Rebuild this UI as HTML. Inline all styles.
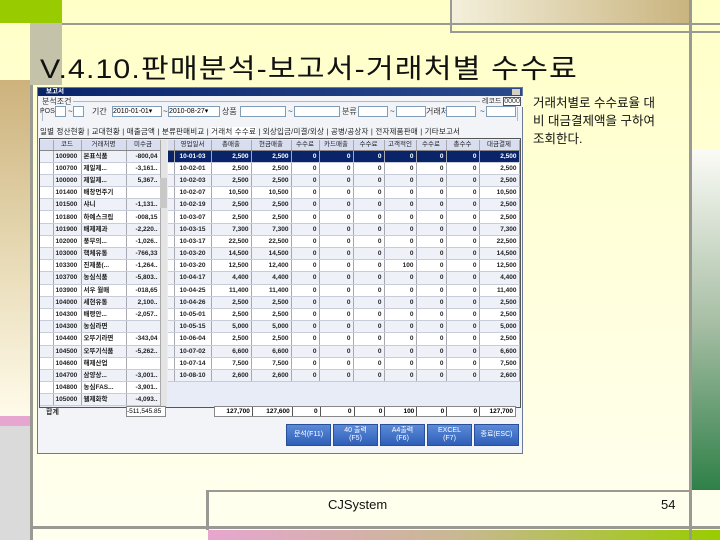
<!DOCTYPE html>
<html><head><meta charset="utf-8">
<style>
*{margin:0;padding:0;box-sizing:border-box}
body{width:720px;height:540px;position:relative;overflow:hidden;background:linear-gradient(#ffffc8,#fffff0);font-family:"Liberation Sans","Noto Sans CJK KR",sans-serif}
.a{position:absolute}
.ln{position:absolute;background:#9a9a94}
table{border-collapse:collapse;table-layout:fixed;position:absolute;font-size:6.5px;font-weight:bold;color:#222}
td{height:12.2px;border-right:1px solid #a8a8b0;border-bottom:1px solid #c8ccd8;white-space:nowrap;overflow:hidden;padding:0 2px;line-height:11px}
tr:nth-child(even) td{background:#eef1f8}
tr:nth-child(odd) td{background:#fff}
tr.h td{background:#d8def0;height:10px;line-height:9px;text-align:center;font-weight:normal;border-bottom:1px solid #888}
tr.s td{background:#0a246a;color:#fff}
.r{text-align:right}
.c{text-align:center}
.in{position:absolute;background:#fff;border:1px solid #7f9db9;height:11px}
.tx{position:absolute;font-size:8px;color:#333;line-height:11px}
.btn{position:absolute;top:424px;height:22px;width:45px;background:linear-gradient(#5b8ad8,#2f5fb8);color:#fff;font-size:7px;text-align:center;line-height:8px;display:flex;align-items:center;justify-content:center;border:1px solid #2a4f9a}
</style></head><body>
<div class="a" style="left:0;top:0;width:62px;height:23px;background:#99cc00"></div>
<div class="a" style="left:30px;top:23px;width:32px;height:62px;background:#c4c2a8"></div>
<div class="a" style="left:0;top:80px;width:30px;height:336px;background:linear-gradient(#cdb27c,#e6d8b2 50%,#fffbea)"></div>
<div class="a" style="left:0;top:416px;width:30px;height:10px;background:#e7a6cf"></div>
<div class="a" style="left:0;top:426px;width:30px;height:114px;background:#dadada"></div>
<div class="a" style="left:450px;top:0;width:240px;height:23px;background:linear-gradient(90deg,#f4f0dc,#c9b47e)"></div>
<div class="a" style="left:692px;top:150px;width:28px;height:340px;background:linear-gradient(#fbfbf6,#a9bfa6 50%,#2f8048)"></div>
<div class="a" style="left:208px;top:530px;width:512px;height:10px;background:linear-gradient(90deg,#e7a6cf,#c8b890 50%,#99cc00)"></div>
<div class="ln" style="left:62px;top:23px;width:658px;height:2px"></div>
<div class="ln" style="left:450px;top:0;width:2px;height:33px"></div>
<div class="ln" style="left:450px;top:31px;width:270px;height:2px"></div>
<div class="ln" style="left:689px;top:0;width:3px;height:540px"></div>
<div class="ln" style="left:30px;top:85px;width:3px;height:455px"></div>
<div class="ln" style="left:30px;top:526px;width:690px;height:3px"></div>
<div class="ln" style="left:206px;top:490px;width:3px;height:40px"></div>
<div class="ln" style="left:206px;top:490px;width:486px;height:2px"></div>

<div class="a" style="left:40px;top:52px;font-size:27px;color:#111;letter-spacing:1px;line-height:34px;white-space:nowrap;transform:scaleX(1.12);transform-origin:0 0">V.4.10.판매분석-보고서-거래처별 수수료</div>
<div class="a" style="left:533px;top:94px;font-size:12.5px;line-height:18px;color:#111;width:160px">거래처별로 수수료율 대<br>비 대금결제액을 구하여<br>조회한다.</div>
<div class="a" style="left:328px;top:497px;font-size:13px;color:#111">CJSystem</div>
<div class="a" style="left:661px;top:497px;font-size:13px;color:#111">54</div>

<div class="a" style="left:37px;top:87px;width:486px;height:367px;background:#f2f4f8;border:1px solid #6a7a98"></div>
<div class="a" style="left:38px;top:88px;width:484px;height:8px;background:linear-gradient(90deg,#0a246a,#2a4a8e)"></div>
<div class="a" style="left:46px;top:87px;font-size:6.5px;color:#fff;font-weight:bold;line-height:9px">보고서</div>
<div class="a" style="left:512px;top:89px;width:8px;height:6px;background:#d4d0c8"></div>
<div class="a" style="left:42px;top:101px;width:476px;height:20px;border:1px solid #b0b8c8;border-bottom:none"></div>
<div class="tx" style="left:40px;top:96px;background:#f2f4f8;padding:0 2px;color:#333">분석조건</div>
<div class="tx" style="left:480px;top:96px;background:#f2f4f8;padding:0 2px;font-size:7px">레코드 <span style="border:1px solid #555;background:#fff">0000</span></div>
<div class="tx" style="left:40px;top:106px;font-size:7px">POS#</div>
<div class="in" style="left:55px;top:106px;width:11px"></div><div class="tx" style="left:68px;top:106px">~</div>
<div class="in" style="left:73px;top:106px;width:11px"></div>
<div class="tx" style="left:92px;top:106px">기간</div>
<div class="in" style="left:112px;top:106px;width:50px;font-size:7px;line-height:9px">2010-01-01▾</div>
<div class="tx" style="left:163px;top:106px">~</div>
<div class="in" style="left:168px;top:106px;width:52px;font-size:7px;line-height:9px">2010-08-27▾</div>
<div class="tx" style="left:222px;top:106px">상품</div>
<div class="in" style="left:240px;top:106px;width:46px"></div><div class="tx" style="left:288px;top:106px">~</div>
<div class="in" style="left:294px;top:106px;width:46px"></div>
<div class="tx" style="left:342px;top:106px">분류</div>
<div class="in" style="left:358px;top:106px;width:30px"></div><div class="tx" style="left:390px;top:106px">~</div>
<div class="in" style="left:396px;top:106px;width:30px"></div>
<div class="tx" style="left:426px;top:106px">거래처</div>
<div class="in" style="left:446px;top:106px;width:30px"></div><div class="tx" style="left:480px;top:106px">~</div>
<div class="in" style="left:486px;top:106px;width:30px"></div>
<div class="a" style="left:40px;top:126px;width:478px;height:12px;font-size:7.5px;color:#222;line-height:12px;white-space:nowrap;letter-spacing:0.2px">일별 정산현황 | 교대현황 | 매출금액 | 분류판매비교 | <span style="background:#fff">거래처 수수료</span> | 외상입금/미결/외상 | 공병/공상자 | 전자제품판매 | 기타보고서</div>
<div class="a" style="left:39px;top:138px;width:482px;height:270px;border:1px solid #555;background:#e8ecf6"></div>

<table style="left:40px;top:140px;width:120px">
<colgroup><col style="width:13px"><col style="width:28px"><col style="width:45px"><col style="width:34px"></colgroup>
<tr class="h"><td></td><td>코드</td><td>거래처명</td><td>미수금</td></tr>
<tr><td></td><td>100900</td><td>본표식품</td><td class="r">-800,04</td></tr>
<tr><td></td><td>100700</td><td>제일제...</td><td class="r">-3,161..</td></tr>
<tr><td></td><td>100000</td><td>제일제...</td><td class="r">5,367..</td></tr>
<tr><td></td><td>101400</td><td>배창먼주기</td><td></td></tr>
<tr><td></td><td>101500</td><td>샤니</td><td class="r">-1,131..</td></tr>
<tr><td></td><td>101800</td><td>하예스크림</td><td class="r">-008,15</td></tr>
<tr><td></td><td>101900</td><td>배제제과</td><td class="r">-2,220..</td></tr>
<tr><td></td><td>102000</td><td>풍무의...</td><td class="r">-1,026..</td></tr>
<tr><td></td><td>103000</td><td>핵체유통</td><td class="r">-766,33</td></tr>
<tr><td></td><td>103300</td><td>진제품(...</td><td class="r">-1,264..</td></tr>
<tr><td></td><td>103700</td><td>농심식품</td><td class="r">-5,803..</td></tr>
<tr><td></td><td>103900</td><td>서우 월매</td><td class="r">-018,65</td></tr>
<tr><td></td><td>104000</td><td>세현유통</td><td class="r">2,100..</td></tr>
<tr><td></td><td>104300</td><td>배령안...</td><td class="r">-2,057..</td></tr>
<tr><td></td><td>104300</td><td>농심라면</td><td></td></tr>
<tr><td></td><td>104400</td><td>오뚜기라면</td><td class="r">-343,04</td></tr>
<tr><td></td><td>104500</td><td>오뚜기식품</td><td class="r">-5,262..</td></tr>
<tr><td></td><td>104600</td><td>해제산업</td><td></td></tr>
<tr><td></td><td>104700</td><td>삼양상...</td><td class="r">-3,001..</td></tr>
<tr><td></td><td>104800</td><td>농심FAS...</td><td class="r">-3,901..</td></tr>
<tr><td></td><td>105000</td><td>웰제화학</td><td class="r">-4,093..</td></tr>
</table>
<div class="a" style="left:160px;top:140px;width:7px;height:266px;background:#e4e4e4;border-left:1px solid #aaa"></div>
<div class="a" style="left:160px;top:178px;width:7px;height:30px;background:#c8c8c8"></div>

<table style="left:168px;top:140px;width:351px">
<colgroup><col style="width:6px"><col style="width:37px"><col style="width:40px"><col style="width:40px"><col style="width:28px"><col style="width:34px"><col style="width:31px"><col style="width:32px"><col style="width:30px"><col style="width:33px"><col style="width:40px"></colgroup>
<tr class="h"><td></td><td>영업일서</td><td>총매출</td><td>현금매출</td><td>수수료</td><td>카드매출</td><td>수수료</td><td>고객적인</td><td>수수료</td><td>총수수</td><td>대금결제</td></tr>
<tr class="s"><td></td><td class="c">10-01-03</td><td class="r">2,500</td><td class="r">2,500</td><td class="r">0</td><td class="r">0</td><td class="r">0</td><td class="r">0</td><td class="r">0</td><td class="r">0</td><td class="r">2,500</td></tr>
<tr><td></td><td class="c">10-02-01</td><td class="r">2,500</td><td class="r">2,500</td><td class="r">0</td><td class="r">0</td><td class="r">0</td><td class="r">0</td><td class="r">0</td><td class="r">0</td><td class="r">2,500</td></tr>
<tr><td></td><td class="c">10-02-03</td><td class="r">2,500</td><td class="r">2,500</td><td class="r">0</td><td class="r">0</td><td class="r">0</td><td class="r">0</td><td class="r">0</td><td class="r">0</td><td class="r">2,500</td></tr>
<tr><td></td><td class="c">10-02-07</td><td class="r">10,500</td><td class="r">10,500</td><td class="r">0</td><td class="r">0</td><td class="r">0</td><td class="r">0</td><td class="r">0</td><td class="r">0</td><td class="r">10,500</td></tr>
<tr><td></td><td class="c">10-02-19</td><td class="r">2,500</td><td class="r">2,500</td><td class="r">0</td><td class="r">0</td><td class="r">0</td><td class="r">0</td><td class="r">0</td><td class="r">0</td><td class="r">2,500</td></tr>
<tr><td></td><td class="c">10-03-07</td><td class="r">2,500</td><td class="r">2,500</td><td class="r">0</td><td class="r">0</td><td class="r">0</td><td class="r">0</td><td class="r">0</td><td class="r">0</td><td class="r">2,500</td></tr>
<tr><td></td><td class="c">10-03-15</td><td class="r">7,300</td><td class="r">7,300</td><td class="r">0</td><td class="r">0</td><td class="r">0</td><td class="r">0</td><td class="r">0</td><td class="r">0</td><td class="r">7,300</td></tr>
<tr><td></td><td class="c">10-03-17</td><td class="r">22,500</td><td class="r">22,500</td><td class="r">0</td><td class="r">0</td><td class="r">0</td><td class="r">0</td><td class="r">0</td><td class="r">0</td><td class="r">22,500</td></tr>
<tr><td></td><td class="c">10-03-20</td><td class="r">14,500</td><td class="r">14,500</td><td class="r">0</td><td class="r">0</td><td class="r">0</td><td class="r">0</td><td class="r">0</td><td class="r">0</td><td class="r">14,500</td></tr>
<tr><td></td><td class="c">10-03-20</td><td class="r">12,500</td><td class="r">12,400</td><td class="r">0</td><td class="r">0</td><td class="r">0</td><td class="r">100</td><td class="r">0</td><td class="r">0</td><td class="r">12,500</td></tr>
<tr><td></td><td class="c">10-04-17</td><td class="r">4,400</td><td class="r">4,400</td><td class="r">0</td><td class="r">0</td><td class="r">0</td><td class="r">0</td><td class="r">0</td><td class="r">0</td><td class="r">4,400</td></tr>
<tr><td></td><td class="c">10-04-25</td><td class="r">11,400</td><td class="r">11,400</td><td class="r">0</td><td class="r">0</td><td class="r">0</td><td class="r">0</td><td class="r">0</td><td class="r">0</td><td class="r">11,400</td></tr>
<tr><td></td><td class="c">10-04-26</td><td class="r">2,500</td><td class="r">2,500</td><td class="r">0</td><td class="r">0</td><td class="r">0</td><td class="r">0</td><td class="r">0</td><td class="r">0</td><td class="r">2,500</td></tr>
<tr><td></td><td class="c">10-05-01</td><td class="r">2,500</td><td class="r">2,500</td><td class="r">0</td><td class="r">0</td><td class="r">0</td><td class="r">0</td><td class="r">0</td><td class="r">0</td><td class="r">2,500</td></tr>
<tr><td></td><td class="c">10-05-15</td><td class="r">5,000</td><td class="r">5,000</td><td class="r">0</td><td class="r">0</td><td class="r">0</td><td class="r">0</td><td class="r">0</td><td class="r">0</td><td class="r">5,000</td></tr>
<tr><td></td><td class="c">10-06-04</td><td class="r">2,500</td><td class="r">2,500</td><td class="r">0</td><td class="r">0</td><td class="r">0</td><td class="r">0</td><td class="r">0</td><td class="r">0</td><td class="r">2,500</td></tr>
<tr><td></td><td class="c">10-07-02</td><td class="r">6,600</td><td class="r">6,600</td><td class="r">0</td><td class="r">0</td><td class="r">0</td><td class="r">0</td><td class="r">0</td><td class="r">0</td><td class="r">6,600</td></tr>
<tr><td></td><td class="c">10-07-14</td><td class="r">7,500</td><td class="r">7,500</td><td class="r">0</td><td class="r">0</td><td class="r">0</td><td class="r">0</td><td class="r">0</td><td class="r">0</td><td class="r">7,500</td></tr>
<tr><td></td><td class="c">10-08-10</td><td class="r">2,600</td><td class="r">2,600</td><td class="r">0</td><td class="r">0</td><td class="r">0</td><td class="r">0</td><td class="r">0</td><td class="r">0</td><td class="r">2,600</td></tr>
</table>

<div class="tx" style="left:46px;top:407px;font-size:7px;font-weight:bold">합계</div>
<div class="in" style="left:126px;top:406px;width:40px;font-size:6.5px;line-height:9px;border-color:#888">-511,545.85</div>
<div class="in" style="left:214px;top:406px;width:302px;border-color:#888;font-size:6.5px;line-height:9px;font-weight:bold;display:flex">
<span style="width:38px;text-align:right;border-right:1px solid #555;padding-right:2px">127,700</span><span style="width:40px;text-align:right;border-right:1px solid #555;padding-right:2px">127,600</span><span style="width:28px;text-align:right;border-right:1px solid #555;padding-right:2px">0</span><span style="width:34px;text-align:right;border-right:1px solid #555;padding-right:2px">0</span><span style="width:31px;text-align:right;border-right:1px solid #555;padding-right:2px">0</span><span style="width:32px;text-align:right;border-right:1px solid #555;padding-right:2px">100</span><span style="width:30px;text-align:right;border-right:1px solid #555;padding-right:2px">0</span><span style="width:33px;text-align:right;border-right:1px solid #555;padding-right:2px">0</span><span style="width:35px;text-align:right;padding-right:2px">127,700</span></div>

<div class="btn" style="left:286px">문석(F11)</div>
<div class="btn" style="left:333px">40 출력<br>(F5)</div>
<div class="btn" style="left:380px">A4출력<br>(F6)</div>
<div class="btn" style="left:427px">EXCEL<br>(F7)</div>
<div class="btn" style="left:474px">종료(ESC)</div>
</body></html>
